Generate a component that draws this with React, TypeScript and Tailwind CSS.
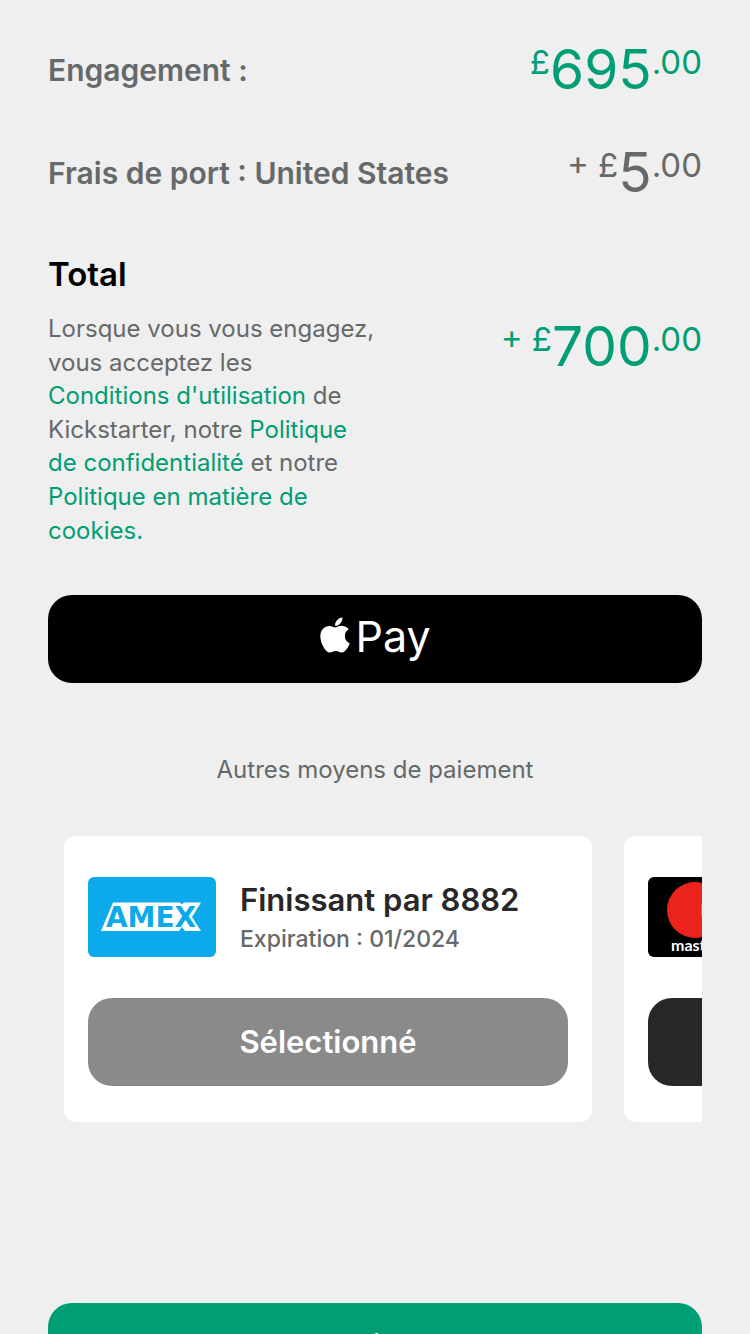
import { FaApple } from "react-icons/fa";

type AmountProps = { prefix: string; whole: string; className: string };

function Amount({ prefix, whole, className }: AmountProps) {
  return (
    <p className={`flex shrink-0 items-start whitespace-pre ${className}`}>
      <span className="text-[33px] leading-10">{prefix}</span>
      <span className="text-[55px] leading-[54px]">{whole}</span>
      <span className="text-[33px] leading-10">.00</span>
    </p>
  );
}

function AmexLogo() {
  return (
    <svg viewBox="0 0 128 80" className="h-20 w-32 shrink-0 rounded-md bg-[#0daaeb]" role="img" aria-label="American Express">
      <path d="M13 54 25 25.500H92l2 2 2-2h17L104 40l9 14H97l-3-4-3 4z" fill="#fff" />
      <text
        x="63"
        y="50"
        textAnchor="middle"
        className="fill-[#0daaeb] font-['DejaVu_Sans',sans-serif] text-[28px] font-bold"
      >
        AMEX
      </text>
    </svg>
  );
}

function MastercardLogo() {
  return (
    <svg viewBox="0 0 128 80" className="h-20 w-32 shrink-0 rounded-md bg-black" role="img" aria-label="Mastercard">
      <circle cx="47" cy="33" r="28" fill="#ec221c" />
      <circle cx="81" cy="33" r="28" fill="#f79e1b" />
      <path d="M64 11a28 28 0 0 1 0 44a28 28 0 0 1 0-44z" fill="#ff5f00" />
      <text x="23" y="74" className="fill-white font-['Lato',sans-serif] text-[16px] font-bold">
        mastercard
      </text>
    </svg>
  );
}

export default function App() {
  return (
    <main className="h-screen overflow-hidden bg-[#efefef] px-12 font-['Inter',sans-serif] text-[#656969]">
      <section className="pt-[42px]">
        <div className="flex items-start justify-between">
          <h2 className="text-[30px] leading-[56px] font-semibold">Engagement :</h2>
          <Amount prefix="£" whole="695" className="text-[#009e74]" />
        </div>
        <div className="mt-[47px] flex items-start justify-between">
          <h2 className="text-[30px] leading-[56px] font-semibold">Frais de port : United States</h2>
          <Amount prefix="+ £" whole="5" className="" />
        </div>
        <div className="mt-[53px] flex justify-between">
          <div className="w-1/2">
            <h2 className="text-[33px] leading-10 font-semibold text-black">Total</h2>
            <p className="mt-[18px] text-2xl leading-[1.4]">
              Lorsque vous vous engagez, vous acceptez les{" "}
              <a href="#conditions" className="text-[#009e74]">Conditions d'utilisation</a> de Kickstarter, notre{" "}
              <a href="#confidentialite" className="text-[#009e74]">Politique de confidentialité</a> et notre{" "}
              <a href="#cookies" className="text-[#009e74]">Politique en matière de cookies.</a>
            </p>
          </div>
          <Amount prefix="+ £" whole="700" className="pt-[65px] text-[#009e74]" />
        </div>
      </section>

      <button type="button" className="mt-12 flex h-[88px] w-full items-center justify-center rounded-3xl bg-black pr-1 pb-1.5 text-white">
        <FaApple className="mb-0.5 size-10" aria-hidden="true" />
        <span className="text-[43px] leading-[52px]">Pay</span>
      </button>

      <section>
        <h3 className="mt-[70px] text-center text-2xl leading-[33px]">Autres moyens de paiement</h3>
        <div className="mt-[50px] flex gap-8 overflow-hidden pl-4">
          <article className="w-[528px] shrink-0 rounded-xl bg-white px-6 pt-[41px] pb-9">
            <div className="flex gap-6">
              <AmexLogo />
              <div>
                <h4 className="pt-[3px] text-[31px] leading-10 font-semibold text-[#282828]">Finissant par 8882</h4>
                <p className="pt-px text-[23px] leading-9 font-medium">Expiration : 01/2024</p>
              </div>
            </div>
            <button type="button" className="mt-[41px] h-[88px] w-full rounded-3xl bg-[#8a8a8a] text-[31px] font-semibold text-white">
              Sélectionné
            </button>
          </article>
          <article className="w-[528px] shrink-0 rounded-xl bg-white px-6 pt-[41px] pb-9">
            <MastercardLogo />
            <button type="button" className="mt-[41px] h-[88px] w-full rounded-3xl bg-[#282828] text-[31px] font-semibold text-white">
              Sélectionner
            </button>
          </article>
        </div>
      </section>

      <button type="button" className="mt-[181px] h-[88px] w-full rounded-3xl bg-[#009e74] pb-0.5 text-[31px] font-semibold text-white">
        Continuer
      </button>
    </main>
  );
}
